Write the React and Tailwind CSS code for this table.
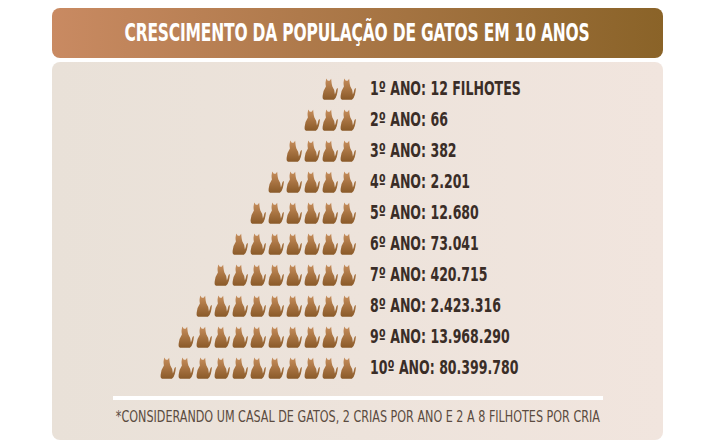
import React from "react";

const years = [
  { n: "1", value: "12 FILHOTES", cats: 2 },
  { n: "2", value: "66", cats: 3 },
  { n: "3", value: "382", cats: 4 },
  { n: "4", value: "2.201", cats: 5 },
  { n: "5", value: "12.680", cats: 6 },
  { n: "6", value: "73.041", cats: 7 },
  { n: "7", value: "420.715", cats: 8 },
  { n: "8", value: "2.423.316", cats: 9 },
  { n: "9", value: "13.968.290", cats: 10 },
  { n: "10", value: "80.399.780", cats: 11 },
];

function Cat() {
  return (
    <svg width="17" height="24" viewBox="0 0 20 26" className="shrink-0">
      <defs>
        <linearGradient id="catfill" x1="0" y1="0" x2="0" y2="1">
          <stop offset="0" stopColor="#c78e5c" />
          <stop offset="1" stopColor="#8a5a29" />
        </linearGradient>
      </defs>
      <path
        fill="url(#catfill)"
        d="M5 0.5 L6.8 3.2 L9 3.2 L10.8 0.8 L11.2 5.2 Q11.4 8 12.2 10 Q15 13.5 15.2 19.5 Q16.2 17 16.8 14 Q17.3 11.3 18.8 12.2 Q18.4 16 17.4 20 Q16.4 24 14 25.5 L2.5 25.5 Q0.2 24.8 0.8 20.5 Q1.6 14.5 4.6 10.2 Q4 7.5 4.2 5 Z"
      />
    </svg>
  );
}

export default function App() {
  return (
    <div className="w-[718px] h-[446px] bg-white pt-[8px] pl-[52px]" style={{ fontFamily: '"DejaVu Sans", "Liberation Sans", sans-serif' }}>
      <div className="w-[611px]">
        <div className="h-[50px] rounded-lg bg-gradient-to-r from-[#c98a62] to-[#8a6328] flex items-center justify-center overflow-hidden">
          <h1 className="text-white font-bold text-[25px] tracking-[-0.3px] whitespace-nowrap scale-x-[0.62] origin-center">
            CRESCIMENTO DA POPULAÇÃO DE GATOS EM 10 ANOS
          </h1>
        </div>
        <div className="mt-[4px] h-[378px] rounded-lg bg-gradient-to-r from-[#e9e1d8] to-[#f1e5de] pt-[11px] flex flex-col">
          {years.map((y) => (
            <div key={y.n} className="h-[31px] flex items-center">
              <div className="w-[305px] flex justify-end gap-[1px]">
                {Array.from({ length: y.cats }).map((_, i) => (
                  <Cat key={i} />
                ))}
              </div>
              <div className="ml-[13px] font-bold text-[19px] text-[#3a2d27] whitespace-nowrap scale-x-[0.66] origin-left">
                {y.n}º ANO: {y.value}
              </div>
            </div>
          ))}
          <div className="mt-[13px] mx-auto w-[490px] h-[4px] bg-white" />
          <div className="mt-[6px] flex justify-center">
            <p className="text-center text-[15px] text-[#5b4b40] whitespace-nowrap scale-x-[0.745] origin-center">
              *CONSIDERANDO UM CASAL DE GATOS, 2 CRIAS POR ANO E 2 A 8 FILHOTES POR CRIA
            </p>
          </div>
        </div>
      </div>
    </div>
  );
}
